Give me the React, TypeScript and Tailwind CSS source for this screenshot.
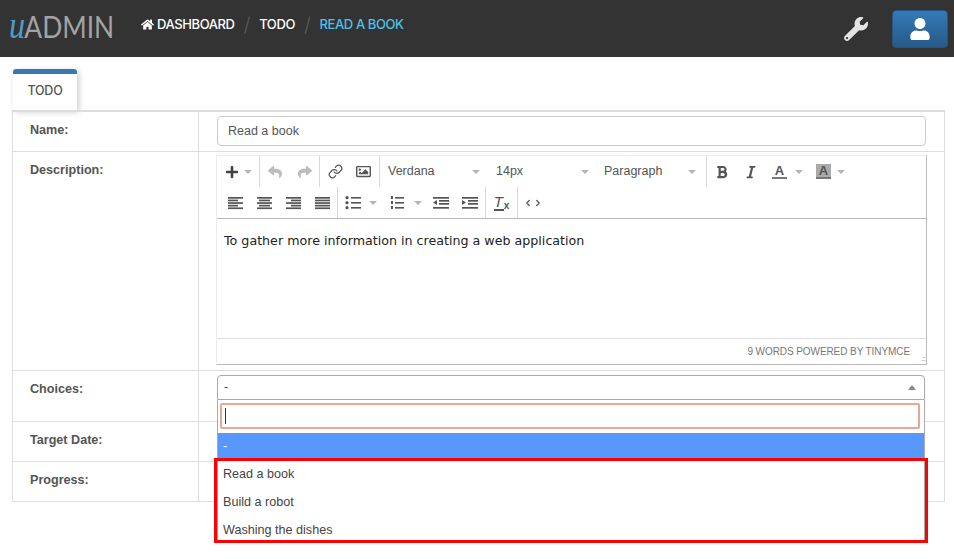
import React from "react";
import { FaHome, FaWrench, FaUser, FaBold, FaItalic, FaReply, FaShare, FaRegImage, FaPlus } from "react-icons/fa";
import { Link as LinkIcon, ChevronLeft, ChevronRight } from "lucide-react";

const Caret = () => (
  <span className="ml-[5px] inline-block h-0 w-0 border-x-[4px] border-t-[4px] border-x-transparent border-t-[#b5b5b5]" />
);

const Sep = () => <div className="h-[31px] w-px bg-[#d9d9d9]" />;

const Lines = ({ kind }: { kind: "left" | "center" | "right" | "justify" }) => {
  const rows: [number, number][] = {
    left: [[1, 15], [1, 10], [1, 15], [1, 10], [1, 15]],
    center: [[1, 15], [3, 11], [1, 15], [3, 11], [1, 15]],
    right: [[1, 15], [6, 10], [1, 15], [6, 10], [1, 15]],
    justify: [[1, 15], [1, 15], [1, 15], [1, 15], [1, 15]],
  }[kind] as [number, number][];
  return (
    <svg width="16" height="14" viewBox="0 0 16 14" className="block">
      {rows.map(([x, w], i) => (
        <rect key={i} x={x - 1} y={1 + i * 2.6} width={w} height="1.7" fill="#555" />
      ))}
    </svg>
  );
};

const Bullets = ({ num }: { num?: boolean }) => (
  <svg width="16" height="14" viewBox="0 0 16 14" className="block">
    {[1, 6, 11].map((y) => (
      <g key={y}>
        {num ? <rect x="1" y={y - 1} width="2" height="3" fill="#555" /> : <circle cx="2" cy={y + 0.7} r="1.6" fill="#555" />}
        <rect x={num ? 5 : 6} y={y} width={num ? 9 : 10} height="1.6" fill="#555" />
      </g>
    ))}
  </svg>
);

const Indent = ({ out }: { out?: boolean }) => (
  <svg width="16" height="14" viewBox="0 0 16 14" className="block">
    <rect x="0" y="1" width="16" height="1.7" fill="#555" />
    <rect x="6" y="4" width="10" height="1.7" fill="#555" />
    <rect x="6" y="7" width="10" height="1.7" fill="#555" />
    <rect x="0" y="11" width="16" height="1.7" fill="#555" />
    <path d={out ? "M4 4v5L0 6.5z" : "M0 4v5l4-2.5z"} fill="#555" />
  </svg>
);

const Label = ({ children }: { children: React.ReactNode }) => (
  <div className="w-[186px] shrink-0 border-r border-[#ddd] pl-[17px] pt-[9px] text-[12.6px] font-bold text-[#555]">{children}</div>
);

export default function App() {
  return (
    <div className="relative h-[559px] w-[954px] overflow-hidden bg-white font-['Liberation_Sans',sans-serif]">
      <header className="flex h-[57px] items-center bg-[#333] font-['Inter',sans-serif] text-white">
        <div className="ml-[9px] w-[132px] pb-[8px]">
          <div className="flex w-[160px] origin-left scale-x-[0.85] items-baseline font-['Lato',sans-serif] text-[31px] font-normal leading-none text-[#a3a3a3]">
            <span className="font-['Liberation_Serif',serif] text-[38px] italic text-[#4f9cc9]">u</span>
            <span className="-ml-px">ADMIN</span>
          </div>
        </div>
        <nav className="flex items-center pb-[8px] text-[13px] font-medium tracking-[-0.4px]">
          <FaHome className="mr-[3px] text-[13px]" />
          <span>DASHBOARD</span>
          <span className="mx-[9px] text-[20px] font-light text-[#5a5a5a]">/</span>
          <span>TODO</span>
          <span className="mx-[9px] text-[20px] font-light text-[#5a5a5a]">/</span>
          <span className="text-[#4fc0ea]">READ A BOOK</span>
        </nav>
        <FaWrench className="ml-auto mr-[24px] text-[24px] text-[#e3e3e3]" />
        <div className="mr-[6px] flex h-[38px] w-[56px] items-center justify-center rounded-[4px] border border-[#245580] bg-gradient-to-b from-[#337ab7] to-[#265a88] text-[22px]">
          <FaUser />
        </div>
      </header>

      <div className="ml-[13px] mt-[12px] flex h-[41px] w-[64px] items-center justify-center rounded-t-[3px] border-t-[5px] border-[#337ab7] bg-white pb-[1px] font-['Inter',sans-serif] text-[12.5px] font-medium tracking-[-0.2px] text-[#555] shadow-[2px_2px_6px_rgba(0,0,0,0.2)]">
        TODO
      </div>

      <div className="relative ml-[12px] w-[933px] border border-t-2 border-[#ddd]">
        <div className="flex h-[40px] border-b border-[#ddd]">
          <Label>Name:</Label>
          <div className="pl-[18px] pt-[4px]">
            <div className="flex h-[30px] w-[709px] items-center rounded-[4px] border border-[#ccc] pl-[10px] text-[12.5px] text-[#555]">Read a book</div>
          </div>
        </div>

        <div className="flex h-[219px] border-b border-[#ddd]">
          <Label>Description:</Label>
          <div className="pl-[17px] pt-[3px]">
            <div className="h-[210px] w-[711px] border border-[#ececec] border-b-[#b9b9b9] border-r-[#b9b9b9] bg-white">
              <div className="border-b border-[#b9b9b9]">
                <div className="flex h-[31px] items-center text-[#555]">
                  <div className="flex w-[42px] items-center justify-center"><FaPlus className="text-[14px] text-[#444]" /><Caret /></div>
                  <Sep />
                  <div className="flex w-[59px] items-center justify-center gap-[16px] text-[14px] text-[#bcbcbc]"><FaReply /><FaShare /></div>
                  <Sep />
                  <div className="flex w-[59px] items-center justify-center gap-[13px]"><LinkIcon size={15} strokeWidth={2} /><FaRegImage className="text-[15px]" /></div>
                  <Sep />
                  <div className="flex w-[108px] items-center justify-between pl-[8px] pr-[8px] text-[12.5px]">Verdana<Caret /></div>
                  <div className="flex w-[109px] items-center justify-between pl-[8px] pr-[8px] text-[12.5px]">14px<Caret /></div>
                  <div className="flex w-[109px] items-center justify-between pl-[7px] pr-[10px] text-[12.5px]">Paragraph<Caret /></div>
                  <Sep />
                  <div className="flex items-center pl-[8px]">
                    <FaBold className="text-[14px]" />
                    <FaItalic className="ml-[15px] text-[14px]" />
                    <div className="ml-[14px] flex h-[15px] w-[15px] items-start justify-center border-b-2 border-[#777] text-[13px] font-bold leading-[13px]">A</div>
                    <span className="ml-[3px] flex"><Caret /></span>
                    <div className="ml-[13px] flex h-[15px] w-[15px] items-start justify-center border-b-2 border-[#777] bg-[#aaa] text-[13px] font-bold leading-[13px]">A</div>
                    <span className="ml-[1px] flex"><Caret /></span>
                  </div>
                </div>
                <div className="flex h-[31px] items-center text-[#555]">
                  <div className="flex items-center gap-[13px] pl-[11px] pr-[6px]"><Lines kind="left" /><Lines kind="center" /><Lines kind="right" /><Lines kind="justify" /></div>
                  <Sep />
                  <div className="flex items-center pl-[7px] pr-[7px]">
                    <Bullets />
                    <span className="ml-[3px] flex"><Caret /></span>
                    <div className="ml-[13px]"><Bullets num /></div>
                    <span className="ml-[3px] flex"><Caret /></span>
                    <div className="ml-[11px]"><Indent out /></div>
                    <div className="ml-[13px]"><Indent /></div>
                  </div>
                  <Sep />
                  <div className="flex w-[31px] items-center justify-center">
                    <span className="border-b-2 border-[#555] pr-px text-[15px] italic leading-[15px]">T</span>
                    <span className="mt-[6px] text-[10px] font-bold leading-none">x</span>
                  </div>
                  <Sep />
                  <div className="flex w-[30px] justify-center"><ChevronLeft size={10} strokeWidth={3} /><ChevronRight size={10} strokeWidth={3} /></div>
                </div>
              </div>
              <div className="h-[120px] border-b border-[#ddd] px-[7px] pt-[12px] font-['DejaVu_Sans',sans-serif] text-[12.67px] text-[#222]">
                To gather more information in creating a web application
              </div>
              <div className="relative flex h-[25px] items-center justify-end pr-[16px] text-[10px] tracking-[-0.08px] text-[#777]">
                9 WORDS POWERED BY TINYMCE
                <span className="absolute bottom-[2px] right-[1px] text-[7px] leading-none tracking-[-1px] text-[#999]">.:::</span>
              </div>
            </div>
          </div>
        </div>

        <div className="flex h-[51px] border-b border-[#ddd]">
          <Label>Choices:</Label>
        </div>
        <div className="flex h-[40px] border-b border-[#ddd]">
          <Label>Target Date:</Label>
        </div>
        <div className="flex h-[39px]">
          <Label>Progress:</Label>
        </div>

        <div className="absolute left-[204px] top-[263px] w-[708px] text-[12.6px] text-[#444]">
          <div className="flex h-[25px] items-center justify-between rounded-t-[4px] border border-[#aaa] bg-white pl-[6px] pr-[8px]">
            -
            <span className="h-0 w-0 border-x-[4px] border-b-[5px] border-x-transparent border-b-[#888]" />
          </div>
          <div className="border-x border-[#aaa] bg-white">
            <div className="pb-[4px] pl-[2px] pr-[4px] pt-[3px]">
              <div className="flex h-[26px] items-center rounded-[2px] border-2 border-[#e8a793] pl-[3px]">
                <span className="h-[16px] w-px bg-[#333]" />
              </div>
            </div>
            <div className="flex h-[25px] items-center bg-[#5897fb] pl-[5px] pt-[2px] text-white">-</div>
            <div className="flex h-[28px] items-end pb-[2px] pl-[5px]">Read a book</div>
            <div className="flex h-[28px] items-end pb-[2px] pl-[5px]">Build a robot</div>
            <div className="flex h-[28px] items-end pb-[2px] pl-[5px]">Washing the dishes</div>
          </div>
          <div className="absolute left-[-3px] top-[83px] h-[85px] w-[714px] border-[3px] border-[#f00]" />
        </div>
      </div>
    </div>
  );
}
